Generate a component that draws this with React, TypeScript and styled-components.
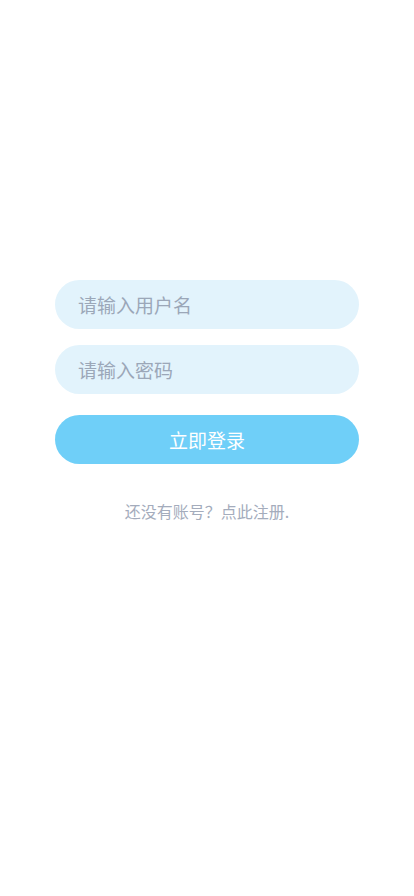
import React from 'react';
import styled, { createGlobalStyle } from 'styled-components';

const Global = createGlobalStyle`
  html, body {
    margin: 0;
    padding: 0;
    background: #fff;
  }
  body {
    font-family: "Noto Sans CJK SC", "Noto Sans", sans-serif;
  }
  * {
    box-sizing: border-box;
  }
`;

const S = {
  Page: styled.div`
    width: 414px;
    min-height: 896px;
    display: flex;
    flex-direction: column;
    align-items: center;
    padding-top: 280px;
  `,

  Form: styled.form`
    width: 304px;
    display: flex;
    flex-direction: column;
  `,

  Input: styled.input`
    width: 100%;
    height: 49px;
    border: none;
    outline: none;
    border-radius: 25px;
    background: #e2f3fc;
    padding: 0 23px;
    font-family: inherit;
    font-size: 19px;
    color: #5d6b7e;
    margin-bottom: 16px;

    &::placeholder {
      color: #9ba7b8;
    }
  `,

  Button: styled.button`
    width: 100%;
    height: 49px;
    margin-top: 5px;
    border: none;
    border-radius: 25px;
    background: #6fcff8;
    color: #fff;
    font-family: inherit;
    font-size: 19px;
    cursor: pointer;
  `,

  Register: styled.a`
    margin-top: 35px;
    font-size: 16px;
    color: #a4acbc;
    text-decoration: none;
    text-align: center;
  `,
};

export default function App() {
  return (
    <S.Page>
      <Global />
      <S.Form onSubmit={(e) => e.preventDefault()}>
        <S.Input placeholder="请输入用户名" />
        <S.Input type="password" placeholder="请输入密码" />
        <S.Button type="submit">立即登录</S.Button>
      </S.Form>
      <S.Register href="#">还没有账号？点此注册.</S.Register>
    </S.Page>
  );
}
